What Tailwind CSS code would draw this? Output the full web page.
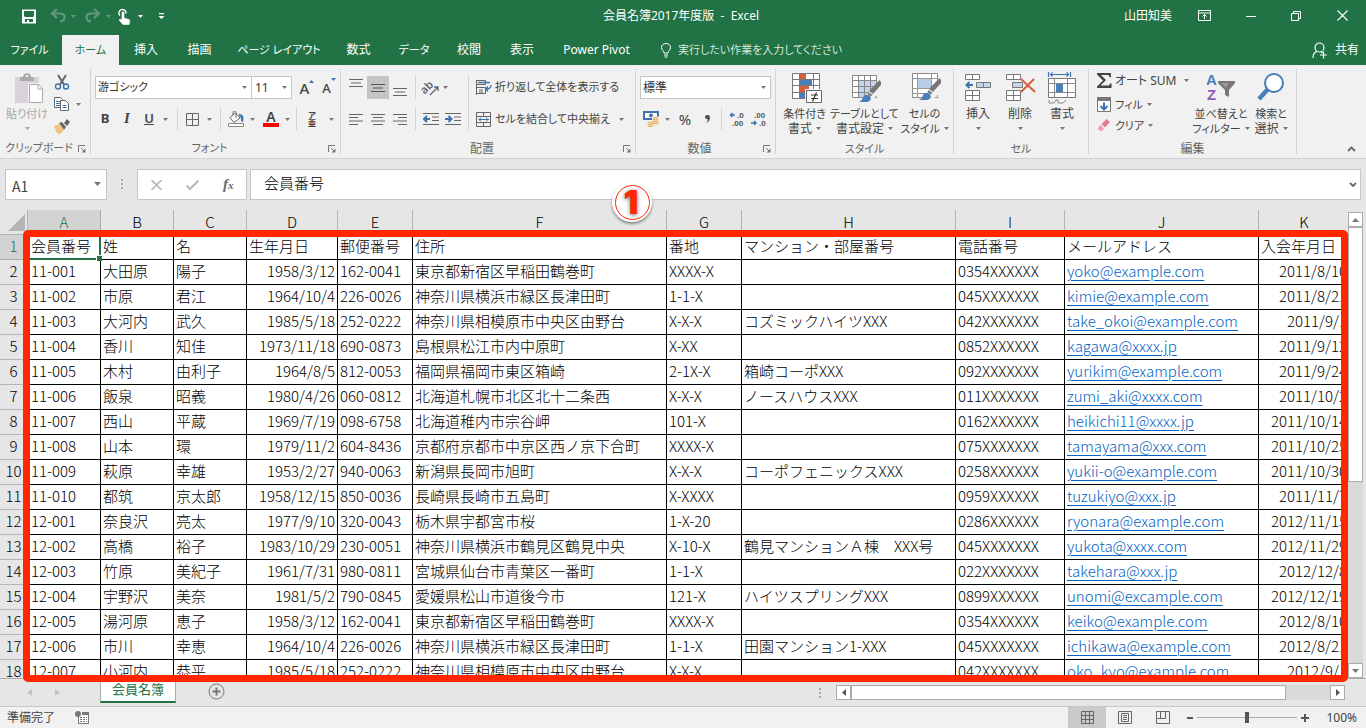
<!DOCTYPE html>
<html lang="ja">
<head>
    <meta charset="UTF-8">
    <meta name="viewport" content="width=device-width, initial-scale=1.0">
    <title>会員名簿2017年度版 - Excel</title>
    <script src="https://cdn.jsdelivr.net/npm/@tailwindcss/browser@4"></script>
</head>
<body class="bg-[#e6e6e6] font-['Noto_Sans','Noto_Sans_CJK_JP',sans-serif] text-xs text-[#444] [font-feature-settings:'palt']">
    <!-- Shared symbols -->
    <svg class="hidden">
        <symbol id="caret" viewBox="0 0 5 3"><path d="M0 0h5L2.500 3z" fill="#777"/></symbol>
        <symbol id="caret-current" viewBox="0 0 5 3"><path d="M0 0h5L2.500 3z" fill="currentColor"/></symbol>
        <symbol id="launcher" viewBox="0 0 8 8"><path d="M.5 7V.5H7M3 3l3 3" fill="none" stroke="#777"/><path d="M7.500 3.500v4h-4z" fill="#777"/></symbol>
        <symbol id="brush" viewBox="0 0 22 23"><path d="M20.500 0L22 2v3l-8 9-4-3z" fill="#777"/><path d="M9.500 12l4 3-2 1.500-3-2.500z" fill="#777"/><path d="M0 22c3-1 3-3 4-5 2-3 5-3 7-.5s0 5-3 5.500z" fill="#4a7eb8"/></symbol>
    </svg>

    <div class="flex h-screen flex-col overflow-hidden">
        <!-- Title bar -->
        <header class="bg-[#217346] text-white">
            <div class="flex h-[35px] items-center pb-1">
                <div class="flex w-[420px] items-center pl-[20px] pt-px">
                    <button aria-label="上書き保存" class="w-[29px]"><svg class="h-[15px] w-[18px]" viewBox="0 0 18 15"><path d="M2 .5h14v14H2z" fill="#fff"/><path d="M4 2h10v5l-1 1H5L4 7zM5 10h8v3H5z" fill="#217346"/><path d="M7 11h2v3H7z" fill="#fff"/></svg></button>
                    <button aria-label="元に戻す" class="flex w-[35px] items-center gap-0.5 text-[#629a7a]"><svg class="h-4 w-5" viewBox="0 0 20 16" fill="none" stroke="currentColor" stroke-width="2.200"><path d="M8 1L3 5.500 8 10M3.500 5.500H11c6 0 6 7 0 8"/></svg><svg class="h-[3px] w-[5px]"><use href="#caret-current"/></svg></button>
                    <button aria-label="やり直し" class="flex w-[33px] items-center gap-0.5 text-[#629a7a]"><svg class="h-4 w-5" viewBox="0 0 20 16" fill="none" stroke="currentColor" stroke-width="2.200"><path d="M10 1l5 4.500L10 10M14.500 5.500H7c-6 0-6 7 0 8"/></svg><svg class="h-[3px] w-[5px]"><use href="#caret-current"/></svg></button>
                    <button aria-label="タッチ モード" class="flex w-[41px] items-center gap-[7px]"><svg class="h-[17px] w-[14px]" viewBox="0 0 14 17"><path d="M2.800 7.500A3.600 3.600 0 1 1 9 5.500" fill="none" stroke="#fff" stroke-width="1.500"/><path d="M5 4h2v6l5 1.500c1 .5 1 2 0 5H6L2 12l2-1 1 1z" fill="#fff" stroke="#fff" stroke-width=".6"/></svg><svg class="h-[3px] w-[5px]"><use href="#caret-current"/></svg></button>
                    <button aria-label="クイック アクセス ツール バーのユーザー設定"><svg class="h-2 w-[7px]" viewBox="0 0 7 8" fill="#fff"><path d="M1 1h5v1.200H1zM.5 4h6l-3 3z"/></svg></button>
                </div>
                <h1 class="flex-1 text-center whitespace-pre pr-1">会員名簿2017年度版  -  Excel</h1>
                <div class="flex w-[420px] items-center justify-end pr-[18px]">
                    <span class="w-[74px]">山田知美</span>
                    <button aria-label="リボンの表示オプション" class="w-[48px]"><svg class="h-[11px] w-[13px]" viewBox="0 0 13 11" fill="none" stroke="#fff"><path d="M.5.500h12v10H.500zM.5 3h12M6.500 9V4.500M4.500 6.500l2-2 2 2"/></svg></button>
                    <button aria-label="最小化" class="w-[45px]"><svg class="h-[10px] w-[10px]" viewBox="0 0 10 10"><path d="M0 5.500h10" stroke="#fff"/></svg></button>
                    <button aria-label="元に戻す (縮小)" class="w-[46px]"><svg class="h-[10px] w-[10px]" viewBox="0 0 10 10" fill="none" stroke="#fff"><path d="M.5 2.500h7v7h-7zM2.500 2.500v-2h7v7h-2"/></svg></button>
                    <button aria-label="閉じる"><svg class="h-[11px] w-[11px]" viewBox="0 0 11 11" stroke="#fff" stroke-width="1.100"><path d="M.5.500l10 10M10.500.500l-10 10"/></svg></button>
                </div>
            </div>
            <!-- Ribbon tabs -->
            <nav class="flex h-[30px] items-stretch whitespace-nowrap">
                <button class="w-[62px] pr-[3px] text-[11px]">ファイル</button>
                <button class="w-[57px] bg-[#f1f1f1] text-[11px] text-[#217346]">ホーム</button>
                <button class="w-[54px]">挿入</button>
                <button class="w-[53px]">描画</button>
                <button class="w-[106px] text-[11px]">ページ レイアウト</button>
                <button class="w-[53px]">数式</button>
                <button class="w-[58px] text-[11px]">データ</button>
                <button class="w-[52px]">校閲</button>
                <button class="w-[54px]">表示</button>
                <button class="w-[98px] pr-[3px]">Power Pivot</button>
                <label class="ml-[14px] flex flex-1 items-center gap-[7px]">
                    <svg class="h-[15px] w-[10px]" viewBox="0 0 10 15" fill="none" stroke="#fff"><path d="M3 10c0-2-2.500-3-2.500-5.500a4.500 4 0 0 1 9 0C9.500 7 7 8 7 10zM3 12h4M3.500 14h3"/></svg>
                    <input aria-label="操作アシスト" placeholder="実行したい作業を入力してください" class="w-56 bg-transparent text-[11px] outline-none placeholder:text-[#d5e6db]">
                </label>
                <button class="flex items-center gap-2 pr-[7px]"><svg class="h-[17px] w-[15px]" viewBox="0 0 15 17" fill="none" stroke="#fff" stroke-width="1.200"><circle cx="7.500" cy="5.500" r="4.500"/><path d="M1 16c0-4 2-6 4-6.500M9 10l1.500 1M8 13h7M11.500 9.500v7"/></svg>共有</button>
            </nav>
        </header>

        <!-- Ribbon -->
        <section class="relative flex h-[94px] shrink-0 border-b border-[#d2d2d2] bg-[#f1f1f1] py-1 whitespace-nowrap">
            <div class="flex w-[91px] flex-col border-r border-[#d2d2d2]">
                <div class="flex flex-1">
                    <button class="flex w-[54px] flex-col items-center pt-[3px] text-[11px] leading-[15px] text-[#a6a6a6]">
                        <svg class="mb-0.5 ml-1 h-8 w-8" viewBox="0 0 32 32"><path d="M2 5h24v26H2z" fill="#d8d3d8"/><path d="M7 9V5h3c0-5 8-5 8 0h3v4z" fill="#aaa"/><circle cx="14" cy="4" r="1.200" fill="#f1f1f1"/><path d="M15 11h16v21H15z" fill="#f1f1f1"/><path d="M16.500 12.500h9l4 4v14h-13z" fill="#fff" stroke="#aaa"/><path d="M25 12v5h5" fill="none" stroke="#aaa"/></svg>
                        貼り付け
                        <svg class="mt-[6px] h-[3px] w-[5px]"><use href="#caret-current"/></svg>
                    </button>
                    <div class="flex flex-col pt-[2px]">
                        <button aria-label="切り取り" class="h-[22px]"><svg class="h-4 w-4" viewBox="0 0 16 16"><path d="M4 1l6 9.500M12 1L6 10.500" stroke="#666" stroke-width="2"/><g fill="none" stroke="#3f73ad" stroke-width="1.400"><circle cx="4" cy="12.500" r="2.500"/><circle cx="12" cy="12.500" r="2.500"/></g></svg></button>
                        <button aria-label="コピー" class="flex h-[23px] items-center gap-1.5"><svg class="h-[15px] w-4" viewBox="0 0 16 15" fill="#fff" stroke="#666"><path d="M.5.500h6l2 2v8h-8z"/><path d="M2 4.500h4M2 6.500h4M2 8.500h4" stroke="#3f73ad"/><path d="M6.500 3.500h5l3 3v7h-8z"/><path d="M8.500 8.500h4M8.500 10.500h4" stroke="#3f73ad"/></svg><svg class="h-[3px] w-[5px]"><use href="#caret"/></svg></button>
                        <button aria-label="書式のコピー" class="h-[22px]"><svg class="h-4 w-4" viewBox="0 0 16 16"><path d="M13 0l3 3-3 4-3-3z" fill="#666"/><path d="M5 4l3-1 4 5-2 3z" fill="#666"/><path d="M0 7l5-2 5 6-4 4-3-1z" fill="#f0c27c"/></svg></button>
                    </div>
                </div>
                <div class="flex h-[11px] items-center text-[#666]"><span class="flex-1 text-center text-[11px]">クリップボード</span><button aria-label="クリップボードの詳細" class="w-3"><svg class="h-2 w-2"><use href="#launcher"/></svg></button></div>
            </div>

            <div class="flex w-[250px] flex-col border-r border-[#d2d2d2]">
                <div class="flex flex-1 flex-col gap-[9px] pt-[7px] pl-1">
                    <div class="flex h-[23px] items-center">
                        <div class="relative"><select aria-label="フォント名" class="h-[23px] w-[157px] appearance-none border border-[#c6c6c6] bg-white px-0.5 text-[11px] text-[#333]"><option>游ゴシック</option></select><svg class="absolute top-[10px] right-[5px] h-[3px] w-[5px]"><use href="#caret"/></svg></div>
                        <div class="relative"><select aria-label="フォント サイズ" class="h-[23px] w-[40px] appearance-none border border-l-0 border-[#c6c6c6] bg-white px-[3px] text-[#333]"><option>11</option></select><svg class="absolute top-[10px] right-[5px] h-[3px] w-[5px]"><use href="#caret"/></svg></div>
                        <button aria-label="フォント サイズの拡大" class="ml-1 flex w-[23px] justify-center"><span class="text-[15px] leading-4 font-medium">A</span><svg class="h-[3px] w-[5px]" viewBox="0 0 5 3"><path d="M0 3h5L2.500 0z" fill="#3f73ad"/></svg></button>
                        <button aria-label="フォント サイズの縮小" class="flex w-[23px] justify-center text-[#3f73ad]"><span class="text-[13px] leading-5 font-medium text-[#444]">A</span><svg class="h-[3px] w-[5px]"><use href="#caret-current"/></svg></button>
                    </div>
                    <div class="flex h-[22px] items-center">
                        <button class="w-[20px] text-[13px] font-bold">B</button>
                        <button class="w-[24px] font-['Liberation_Serif',serif] text-[15px] font-bold italic">I</button>
                        <button class="w-[20px] text-[13px] font-semibold underline">U</button>
                        <button aria-label="下線の種類" class="w-[18px] pl-1"><svg class="h-[3px] w-[5px]"><use href="#caret"/></svg></button>
                        <i class="h-[22px] w-px bg-[#d2d2d2]"></i>
                        <button aria-label="罫線" class="flex w-[42px] items-center gap-2 pl-2"><svg class="h-[13px] w-[13px]" viewBox="0 0 13 13" fill="none" stroke="#666"><path d="M.5.500h12v12H.500zM6.500 0v13M0 6.500h13"/></svg><svg class="h-[3px] w-[5px]"><use href="#caret"/></svg></button>
                        <i class="h-[22px] w-px bg-[#d2d2d2]"></i>
                        <button aria-label="塗りつぶしの色" class="flex w-[35px] items-center gap-1.5 pl-[7px]"><svg class="h-4 w-4" viewBox="0 0 16 16"><path d="M2 6.500L7.500 2l4.500 5-6 4.500z" fill="#fff" stroke="#666"/><path d="M5 4V1.500c0-2 3-2 3 0V7" fill="none" stroke="#666"/><path d="M11 3c5 0 5 4 4 8l-2-1c0-3 0-4-2-5z" fill="#3f73ad"/><path d="M.5 12.500h15v3H.500z" fill="#fff" stroke="#888"/></svg><svg class="h-[3px] w-[5px]"><use href="#caret"/></svg></button>
                        <button aria-label="フォントの色" class="flex w-[40px] items-center gap-1.5 pl-[7px]"><span class="w-4 border-b-4 border-[#f00] text-center text-[14px] leading-3 font-semibold">A</span><svg class="h-[3px] w-[5px]"><use href="#caret"/></svg></button>
                        <i class="h-[22px] w-px bg-[#d2d2d2]"></i>
                        <button aria-label="ふりがなの表示" class="flex items-center gap-[13px] pl-[11px]"><span class="flex w-2 flex-col items-center text-[8px] leading-2 font-bold"><span>ア</span><span>亜</span></span><svg class="h-[3px] w-[5px]"><use href="#caret"/></svg></button>
                    </div>
                </div>
                <div class="flex h-[11px] items-center text-[#666]"><span class="flex-1 text-center text-[11px]">フォント</span><button aria-label="フォントの詳細" class="w-3"><svg class="h-2 w-2"><use href="#launcher"/></svg></button></div>
            </div>

            <div class="flex w-[295px] flex-col border-r border-[#d2d2d2]">
                <div class="flex flex-1 pt-[7px] pl-1">
                    <div class="flex h-[54px] w-[124px] flex-col gap-[9px] border-r border-[#d2d2d2]">
                        <div class="flex h-[23px] items-center">
                            <button aria-label="上揃え" class="flex h-[23px] w-[22px] justify-center pt-[3px]"><svg class="h-2 w-[14px]" viewBox="0 0 14 8"><path d="M0 .5h14M2 4h10M0 7.500h14" stroke="#666"/></svg></button>
                            <button aria-label="上下中央揃え" class="flex h-[23px] w-[22px] items-center justify-center bg-[#c5c5c5]"><svg class="h-[8px] w-[14px]" viewBox="0 0 14 8"><path d="M0 .5h14M2 4h10M0 7.500h14" stroke="#555"/></svg></button>
                            <button aria-label="下揃え" class="flex h-[23px] w-[22px] items-end justify-center pb-[3px]"><svg class="h-2 w-[14px]" viewBox="0 0 14 8"><path d="M0 .5h14M2 4h10M0 7.500h14" stroke="#666"/></svg></button>
                            <i class="ml-1 h-[23px] w-px bg-[#d2d2d2]"></i>
                            <button aria-label="方向" class="ml-[7px] flex items-center gap-1"><svg class="h-4 w-4 overflow-visible" viewBox="0 0 16 16"><text x="0" y="13" transform="rotate(-45 3 12)" font-size="11" font-weight="600" fill="#666">ab</text><path d="M7 15l8-8M11 7h4v4" fill="none" stroke="#666" stroke-width="1.300"/></svg><svg class="h-[3px] w-[5px]"><use href="#caret"/></svg></button>
                        </div>
                        <div class="flex h-[22px] items-center">
                            <button aria-label="左揃え" class="flex w-[22px] justify-center"><svg class="h-[11px] w-[14px]" viewBox="0 0 14 11"><path d="M0 .5h14M0 3.500h9M0 7h14M0 10.500h9" stroke="#666"/></svg></button>
                            <button aria-label="中央揃え" class="flex w-[22px] justify-center"><svg class="h-[11px] w-[14px]" viewBox="0 0 14 11"><path d="M0 .5h14M2 3.500h10M0 7h14M2 10.500h10" stroke="#666"/></svg></button>
                            <button aria-label="右揃え" class="flex w-[22px] justify-center"><svg class="h-[11px] w-[14px]" viewBox="0 0 14 11"><path d="M0 .5h14M5 3.500h9M0 7h14M5 10.500h9" stroke="#666"/></svg></button>
                            <i class="ml-1 h-[22px] w-px bg-[#d2d2d2]"></i>
                            <button aria-label="インデントを減らす" class="ml-[7px] w-[22px]"><svg class="h-3 w-4" viewBox="0 0 16 12"><path d="M0 .5h16M9 4h7M9 7.500h7M0 11.500h16" stroke="#666"/><path d="M7 6H1.500M4 3L1 6l3 3" fill="none" stroke="#3f73ad" stroke-width="2"/></svg></button>
                            <button aria-label="インデントを増やす"><svg class="h-3 w-4" viewBox="0 0 16 12"><path d="M0 .5h16M9 4h7M9 7.500h7M0 11.500h16" stroke="#666"/><path d="M0 6h6M3.500 3l3 3-3 3" fill="none" stroke="#3f73ad" stroke-width="2"/></svg></button>
                        </div>
                    </div>
                    <div class="flex flex-1 flex-col gap-[9px] pl-[7px] text-[11px]">
                        <button class="flex h-[23px] items-center gap-[3px]"><svg class="h-[15px] w-4" viewBox="0 0 16 15"><path d="M.5 0v15M.5.500h9v4h-9M.5 7.500h9v6h-9M3 10h4M3 12h4" fill="none" stroke="#666"/><path d="M2 2.500h12M15 5c0 3-1 4-5 4M12 6.500L9.500 9l2.500 2.500" fill="none" stroke="#3f73ad" stroke-width="1.400"/></svg>折り返して全体を表示する</button>
                        <button class="flex h-[22px] items-center gap-[3px]"><svg class="h-[15px] w-4" viewBox="0 0 16 15" fill="none" stroke="#666"><path d="M.5.500h14v14H.500zM.5 4.500h14M.5 10.500h14M7.500 0v4M7.500 11v4"/><path d="M3 7.500h10M5 5.500l-2 2 2 2M10 5.500l2 2-2 2" stroke="#3f73ad"/></svg>セルを結合して中央揃え<svg class="ml-1.5 h-[3px] w-[5px]"><use href="#caret"/></svg></button>
                    </div>
                </div>
                <div class="flex h-[11px] items-center text-[#666]"><span class="flex-1 text-center">配置</span><button aria-label="配置の詳細" class="w-3"><svg class="h-2 w-2"><use href="#launcher"/></svg></button></div>
            </div>

            <div class="flex w-[140px] flex-col border-r border-[#d2d2d2]">
                <div class="flex flex-1 flex-col gap-[9px] pt-[7px] pl-1">
                    <div class="relative h-[23px] w-[131px]"><select aria-label="表示形式" class="h-full w-full appearance-none border border-[#c6c6c6] bg-white px-0.5 text-[#333]"><option>標準</option></select><svg class="absolute top-[10px] right-[5px] h-[3px] w-[5px]"><use href="#caret"/></svg></div>
                    <div class="flex h-[22px] items-center pl-[3px]">
                        <button aria-label="通貨表示形式" class="flex w-[34px] items-center gap-1.5"><svg class="h-4 w-4" viewBox="0 0 16 16"><path d="M0 0h16v9H0z" fill="#3f73ad"/><path d="M2 2h12v5H2z" fill="#fff"/><circle cx="8" cy="4.500" r="2" fill="#3f73ad"/><path d="M9 5.500h7v9H9zM4 10h7v6H4z" fill="#f1f1f1"/><path d="M10 6.500h5M9.500 8.500h6M9.500 10.500h6M9.500 12.500h6M5 11.500h5M4.500 13.500h6M5 15.500h5" stroke="#eab766" stroke-width="1.400"/></svg><svg class="h-[3px] w-[5px]"><use href="#caret"/></svg></button>
                        <button class="w-[16px] text-[15px]">%</button>
                        <button aria-label="桁区切りスタイル" class="flex w-[28px] justify-center"><svg class="h-2 w-[5px]" viewBox="0 0 5 8"><path d="M0 2a2.400 2 0 0 1 5 0c0 3-1 5-4 6 1-1 2-2 1.500-4C1 4 0 3.500 0 2z" fill="#555"/></svg></button>
                        <i class="h-[22px] w-px bg-[#d2d2d2]"></i>
                        <button aria-label="小数点以下の表示桁数を増やす" class="ml-[7px] w-[22px]"><svg class="h-4 w-4 font-['Liberation_Sans',sans-serif]" viewBox="0 0 16 16" font-size="8" font-weight="700" fill="#555"><text x="8" y="7">.0</text><text x="3" y="15">.00</text><path d="M6 4H1.500M3.500 2l-2 2 2 2" fill="none" stroke="#3f73ad" stroke-width="1.500"/></svg></button>
                        <button aria-label="小数点以下の表示桁数を減らす"><svg class="h-4 w-4 font-['Liberation_Sans',sans-serif]" viewBox="0 0 16 16" font-size="8" font-weight="700" fill="#555"><text x="3" y="7">.00</text><text x="8" y="15">.0</text><path d="M0 12h4.500M3 10l2 2-2 2" fill="none" stroke="#3f73ad" stroke-width="1.500"/></svg></button>
                    </div>
                </div>
                <div class="flex h-[11px] items-center text-[#666]"><span class="flex-1 text-center">数値</span><button aria-label="数値の詳細" class="w-3"><svg class="h-2 w-2"><use href="#launcher"/></svg></button></div>
            </div>

            <div class="flex w-[178px] flex-col border-r border-[#d2d2d2]">
                <div class="flex flex-1 justify-center text-[11px] leading-[15px]">
                    <button class="flex w-[56px] flex-col items-center pt-[3px]">
                        <svg class="mb-0.5 ml-1 h-8 w-8" viewBox="0 0 32 32"><path d="M1.500 1.500h27v25h-27z" fill="#fff"/><path d="M9 2h6v6H9zM9 14h9v6H9z" fill="#d65f3e"/><path d="M9 8h12v6H9zM9 20h5v6H9z" fill="#4a7eb8"/><path d="M1.500 1.500h27v25h-27zM8.500 1v26M22.500 1v26M1 7.500h28M1 13.500h28M1 20.500h28" fill="none" stroke="#777"/><path d="M14 17h18v15H14z" fill="#f1f1f1"/><path d="M15.500 18.500h15v12h-15z" fill="#fff" stroke="#666"/><path d="M20 23h7M20 26.500h7M25.500 20.500l-4 9" stroke="#333" stroke-width="1.200"/></svg>
                        <span>条件付き</span><span class="flex items-center gap-1 text-xs leading-[15px]">書式<svg class="h-[3px] w-[5px]"><use href="#caret"/></svg></span>
                    </button>
                    <button class="flex w-[64px] flex-col items-center pt-[3px]">
                        <svg class="mb-0.5 ml-1 h-8 w-8" viewBox="0 0 32 32"><path d="M1.500 3.500h24v22h-24z" fill="#fff"/><path d="M8 8h18v18H8z" fill="#c3d5ea"/><path d="M1.500 3.500h24v22h-24zM7.500 3v23M13.500 3v23M19.500 3v23M1 8.500h25M1 14.500h25M1 20.500h25" fill="none" stroke="#888"/><path d="M6 30L31 9v10L18 31z" fill="#f1f1f1"/><use href="#brush" x="8" y="8" width="22" height="23"/></svg>
                        <span>テーブルとして</span><span class="flex items-center gap-1 text-xs leading-[15px]">書式設定<svg class="h-[3px] w-[5px]"><use href="#caret"/></svg></span>
                    </button>
                    <button class="flex w-[56px] flex-col items-center pt-[3px]">
                        <svg class="mb-0.5 ml-1 h-8 w-8" viewBox="0 0 32 32"><path d="M1.500 1.500h25v24h-25z" fill="#fff" stroke="#888"/><path d="M6.500 1v25M20.500 1v25M1 6.500h26M1 16.500h26M1 21.500h26" stroke="#999"/><path d="M7 7h13v9H7z" fill="#b8cde6"/><path d="M6 30L31 7v12L18 31z" fill="#f1f1f1"/><use href="#brush" x="8" y="6" width="22" height="23"/></svg>
                        <span>セルの</span><span class="flex items-center gap-1">スタイル<svg class="h-[3px] w-[5px]"><use href="#caret"/></svg></span>
                    </button>
                </div>
                <div class="h-[11px] text-center text-[11px] leading-[11px] text-[#666]">スタイル</div>
            </div>

            <div class="flex w-[135px] flex-col border-r border-[#d2d2d2]">
                <div class="flex flex-1 pl-[3px] leading-[15px]">
                    <button class="flex w-[42px] flex-col items-center pt-[3px]">
                        <svg class="mb-0.5 h-8 w-8" viewBox="0 0 32 32"><path d="M3.500 2.500h14v5h-14zM10.500 2v6M3.500 18.500h14v10h-14zM10.500 18v11M3 23.500h15" fill="#fff" stroke="#777"/><path d="M14.500 10.500h14v5h-14zM21.500 10v6" fill="#c3d5ea" stroke="#777"/><path d="M11 13H5M7.500 10L4.500 13l3 3" fill="none" stroke="#3f73ad" stroke-width="2"/></svg>
                        挿入<svg class="mt-[6px] h-[3px] w-[5px]"><use href="#caret"/></svg>
                    </button>
                    <button class="flex w-[42px] flex-col items-center pt-[3px]">
                        <svg class="mb-0.5 h-8 w-8" viewBox="0 0 32 32"><path d="M2.500 2.500h14v5h-14zM9.500 2v6M2.500 18.500h14v10h-14zM9.500 18v11M2 23.500h15" fill="#fff" stroke="#777"/><path d="M8.500 10.500h10v5h-10z" fill="#c3d5ea" stroke="#777"/><path d="M17 7l14 13M30 7L17 20" stroke="#d65f3e" stroke-width="2"/></svg>
                        削除<svg class="mt-[6px] h-[3px] w-[5px]"><use href="#caret"/></svg>
                    </button>
                    <button class="flex w-[42px] flex-col items-center pt-[3px]">
                        <svg class="mb-0.5 h-8 w-8" viewBox="0 0 32 32"><path d="M2.500 0v5M24.500 0v5M4 2.500h19M6.500.500l-2 2 2 2M20.500.500l2 2-2 2" fill="none" stroke="#3f73ad" stroke-width="1.200"/><path d="M2.500 6.500h27v19h-27z" fill="#fff" stroke="#777"/><path d="M8.500 6v20M21.500 6v20M2 11.500h28M2 20.500h28" stroke="#888"/><path d="M10 12h7v8h-7z" fill="#4a7eb8"/><path d="M3 28v3h5l2-3h2v3h5l3-3" fill="none" stroke="#888"/></svg>
                        書式<svg class="mt-[6px] h-[3px] w-[5px]"><use href="#caret"/></svg>
                    </button>
                </div>
                <div class="h-[11px] text-center text-[11px] leading-[11px] text-[#666]">セル</div>
            </div>

            <div class="flex w-[208px] flex-col border-r border-[#d2d2d2]">
                <div class="flex flex-1 pl-2 leading-[15px]">
                    <div class="mr-1 flex w-[92px] flex-col">
                        <button class="flex h-[22px] items-center gap-[3px]"><svg class="h-[15px] w-[15px]" viewBox="0 0 15 15"><path d="M0 0h14v4h-1.500l-1-2H4l5 5-5.500 5.500H12l1-2h1.500V15H0v-1.500L6 7.500 0 1.500z" fill="#444"/></svg>オート SUM<svg class="ml-auto h-[3px] w-[5px]"><use href="#caret"/></svg></button>
                        <button class="flex h-[23px] items-center gap-1 pt-1 text-[11px]"><svg class="h-[15px] w-[14px]" viewBox="0 0 14 15"><path d="M.5.500h13v14H.500z" fill="#fff" stroke="#777"/><path d="M0 0h14v4H0z" fill="#777"/><path d="M7 5.500V12M3.500 9L7 12.500 10.500 9" fill="none" stroke="#3f73ad" stroke-width="2"/></svg>フィル<svg class="h-[3px] w-[5px]"><use href="#caret"/></svg></button>
                        <button class="flex h-[22px] items-center gap-1 text-[11px]"><svg class="h-3 w-[14px]" viewBox="0 0 14 12"><path d="M9.500 0L13 3 8 8.500 4.500 5z" fill="#e67b90"/><path d="M3.500 6L7 9.500 5 12H3L.500 9.500z" fill="#ee9fae"/></svg>クリア<svg class="h-[3px] w-[5px]"><use href="#caret"/></svg></button>
                    </div>
                    <button class="flex w-[56px] flex-col items-center pt-[3px] text-[11px]">
                        <svg class="mb-0.5 h-8 w-8 font-['Liberation_Sans',sans-serif]" viewBox="0 0 32 32" font-size="15" font-weight="700"><text x="1" y="13" fill="#4a7eb8">A</text><text x="2" y="28" fill="#8f5bb5">Z</text><path d="M13 9h17v2l-6 7v7l-4-2v-5l-7-7z" fill="#777"/><path d="M16 11h8l-3 5z" fill="#999"/></svg>
                        <span>並べ替えと</span><span class="flex items-center gap-1">フィルター<svg class="h-[3px] w-[5px]"><use href="#caret"/></svg></span>
                    </button>
                    <button class="flex w-[44px] flex-col items-center pt-[3px] text-[11px]">
                        <svg class="mb-0.5 h-8 w-8" viewBox="0 0 32 32"><path d="M13 17L4 27" stroke="#4a7eb8" stroke-width="4.500"/><circle cx="19" cy="11" r="9" fill="#fff" stroke="#4a7eb8" stroke-width="2"/></svg>
                        <span>検索と</span><span class="flex items-center gap-1 text-xs leading-[15px]">選択<svg class="h-[3px] w-[5px]"><use href="#caret"/></svg></span>
                    </button>
                </div>
                <div class="h-[11px] text-center leading-[11px] text-[#666]">編集</div>
            </div>
            <button aria-label="リボンを折りたたむ" class="ml-auto self-end pr-[10px] pb-0.5"><svg class="h-[6px] w-[9px]" viewBox="0 0 9 6"><path d="M1 5l3.500-3.500L8 5" fill="none" stroke="#666" stroke-width="1.800"/></svg></button>
        </section>

        <!-- Formula bar -->
        <section class="flex h-[51px] shrink-0 items-start py-[10px] pr-[5px] pl-[5px] font-['Noto_Sans_CJK_JP',sans-serif] text-sm">
            <div class="relative"><input aria-label="名前ボックス" value="A1" class="h-[31px] w-[102px] border border-[#c6c6c6] bg-white px-1.5 pt-0.5"><svg class="absolute top-[13px] right-[6px] h-1 w-[7px]" viewBox="0 0 7 4"><path d="M0 0h7L3.500 4z" fill="#777"/></svg></div>
            <svg class="h-[31px] w-[30px]" viewBox="0 0 30 31" fill="#aaa"><path d="M14 10h2v2h-2zM14 14h2v2h-2zM14 18h2v2h-2z"/></svg>
            <div class="flex h-[31px] w-[110px] items-center border border-[#c6c6c6] bg-white pl-[13px]">
                <button aria-label="キャンセル" class="w-[35px]"><svg class="h-[10px] w-[11px]" viewBox="0 0 11 10"><path d="M.5 0l10 10M10.500 0L.500 10" stroke="#bbb" stroke-width="1.800"/></svg></button>
                <button aria-label="入力" class="w-[37px]"><svg class="h-[10px] w-[13px]" viewBox="0 0 13 10"><path d="M.5 5.500L4 9l8.500-8.500" fill="none" stroke="#bbb" stroke-width="2.200"/></svg></button>
                <button aria-label="関数の挿入" class="font-['Liberation_Serif',serif] text-[15px] leading-4 font-bold text-[#666] italic">f<span class="text-[11px]">x</span></button>
            </div>
            <div class="relative ml-[3px] flex-1"><input aria-label="数式バー" value="会員番号" class="h-[31px] w-full border border-[#c6c6c6] bg-white px-[13px] pb-1 text-[15px] font-light text-black [font-feature-settings:normal]"><svg class="absolute top-[13px] right-1 h-[5px] w-2" viewBox="0 0 8 5"><path d="M1 1l3 3 3-3" fill="none" stroke="#666" stroke-width="1.800"/></svg></div>
        </section>

        <!-- Worksheet -->
        <main class="relative flex min-h-0 flex-1">
            <div class="min-w-0 flex-1 overflow-hidden">
                <table class="w-[1350px] table-fixed border-separate border-spacing-0 font-['Noto_Sans_CJK_JP',sans-serif] text-[15px] leading-[22px] font-light whitespace-nowrap text-black [font-feature-settings:normal]">
                    <colgroup>
                        <col class="w-[28px]"><col class="w-[73px]"><col class="w-[73px]"><col class="w-[73px]"><col class="w-[91px]"><col class="w-[75px]"><col class="w-[254px]"><col class="w-[75px]"><col class="w-[214px]"><col class="w-[109px]"><col class="w-[194px]"><col class="w-[91px]">
                    </colgroup>
                    <thead><tr id="columns"></tr></thead>
                    <tbody id="rows"></tbody>
                </table>
            </div>
            <div class="flex w-[18px] flex-col items-center pt-0.5 pr-1">
                <button aria-label="上へスクロール" class="flex h-[15px] w-[15px] items-center justify-center border border-[#ababab] bg-white"><svg class="h-1 w-[7px]" viewBox="0 0 7 4"><path d="M0 4h7L3.500 0z" fill="#777"/></svg></button>
                <div class="flex w-[15px] flex-1 flex-col bg-[#dadada]"><div class="h-[255px] border border-[#ababab] bg-white"></div></div>
                <button aria-label="下へスクロール" class="flex h-[15px] w-[15px] items-center justify-center border border-[#ababab] bg-white"><svg class="h-1 w-[7px]" viewBox="0 0 7 4"><path d="M0 0h7L3.500 4z" fill="#777"/></svg></button>
            </div>
            <!-- Highlight around the list -->
            <div class="pointer-events-none absolute top-[20px] right-[18px] -bottom-1 left-[23px] z-10 rounded-[5px] border-[7px] border-[#ff2600]"></div>
            <div class="absolute -top-[28px] left-[612px] z-20 flex h-10 w-10 items-center justify-center rounded-full bg-white shadow-[0_2px_3px_rgba(0,0,0,0.4)]">
                <span class="flex h-[35px] w-[35px] items-center justify-center rounded-full border border-[#ff2600] pr-0.5 font-['Inter','Liberation_Sans',sans-serif] text-[33px] leading-none font-black text-[#ff2600] [text-shadow:0_1px_4px_rgba(0,0,0,0.6)]">1</span>
            </div>
        </main>

        <!-- Sheet tabs -->
        <nav class="flex h-[29px] shrink-0 border-t border-b border-t-[#ababab] border-b-[#c6c6c6]">
            <div class="flex w-[100px] gap-[23px] pt-[10px] pl-[27px]">
                <button aria-label="前のシート" class="h-[7px]"><svg class="h-[7px] w-[5px]" viewBox="0 0 5 7"><path d="M5 0v7L0 3.500z" fill="#c2c2c2"/></svg></button>
                <button aria-label="次のシート" class="h-[7px]"><svg class="h-[7px] w-[5px]" viewBox="0 0 5 7"><path d="M0 0v7l5-3.500z" fill="#c2c2c2"/></svg></button>
            </div>
            <button class="h-[24px] w-[76px] border-x border-b-2 border-x-[#ababab] border-b-[#217346] bg-white text-[13px] text-[#217346]">会員名簿</button>
            <button aria-label="新しいシート" class="ml-8 self-start pt-1"><svg class="h-[17px] w-[17px]" viewBox="0 0 17 17" fill="none" stroke="#777"><circle cx="8.500" cy="8.500" r="7.500"/><path d="M8.500 4.500v8M4.500 8.500h8" stroke-width="2"/></svg></button>
            <div class="ml-auto flex items-center pr-[21px]">
                <svg class="mr-[14px] h-3 w-[3px]" viewBox="0 0 3 12" fill="#aaa"><path d="M0 1h2v2H0zM0 5h2v2H0zM0 9h2v2H0z"/></svg>
                <button aria-label="左へスクロール" class="flex h-[15px] w-[15px] items-center justify-center border border-[#ababab] bg-white"><svg class="h-[7px] w-1" viewBox="0 0 4 7"><path d="M4 0v7L0 3.500z" fill="#555"/></svg></button>
                <div class="flex h-[15px] w-[479px] bg-[#dadada]"><div class="w-[435px] border border-[#ababab] bg-white"></div></div>
                <button aria-label="右へスクロール" class="flex h-[15px] w-[15px] items-center justify-center border border-[#ababab] bg-white"><svg class="h-[7px] w-1" viewBox="0 0 4 7"><path d="M0 0v7l4-3.500z" fill="#555"/></svg></button>
            </div>
        </nav>

        <!-- Status bar -->
        <footer class="flex h-[21px] shrink-0 items-center bg-[#f1f1f1] pl-[7px]">
            <span class="w-[68px]">準備完了</span>
            <button aria-label="マクロの記録"><svg class="h-[13px] w-[14px]" viewBox="0 0 14 13"><path d="M3.500 5v7.500h10v-10H8" fill="#fff" stroke="#777"/><path d="M7 1h7v3H7z" fill="#777"/><circle cx="3" cy="3" r="3" fill="#777"/><path d="M5 6.500h7M5 8.500h7M5 10.500h7" stroke="#777" stroke-dasharray="2 1"/></svg></button>
            <div class="ml-auto flex h-full items-center">
                <button aria-label="標準" class="flex h-full w-[38px] items-center justify-center bg-[#cacaca]"><svg class="h-[13px] w-[13px]" viewBox="0 0 13 13" fill="none" stroke="#666"><path d="M.5.500h12v12H.500zM4.500 0v13M8.500 0v13M0 4.500h13M0 8.500h13"/></svg></button>
                <button aria-label="ページ レイアウト" class="flex w-[38px] items-center justify-center"><svg class="h-[13px] w-[14px]" viewBox="0 0 14 13" fill="none" stroke="#666"><path d="M.5.500h13v12H.500zM3.500 2.500h7v8h-7zM5 4.500h4M5 6.500h4M5 8.500h4"/></svg></button>
                <button aria-label="改ページ プレビュー" class="flex w-[38px] items-center justify-center"><svg class="h-[13px] w-[14px]" viewBox="0 0 14 13" fill="none" stroke="#666"><path d="M.5.500h13v12H.500zM4.500 0v7.500M9.500 0v7.500M.5 7.500h9"/></svg></button>
                <button aria-label="縮小" class="flex w-[15px] justify-center"><svg class="h-2 w-2" viewBox="0 0 8 8"><path d="M1 4h6" stroke="#555" stroke-width="2"/></svg></button>
                <input type="range" aria-label="ズーム" value="50" class="h-[13px] w-[100px] appearance-none bg-[linear-gradient(#ababab,#ababab)] bg-[length:100%_1px] bg-center bg-no-repeat [&::-webkit-slider-thumb]:h-[11px] [&::-webkit-slider-thumb]:w-1 [&::-webkit-slider-thumb]:appearance-none [&::-webkit-slider-thumb]:bg-[#555]">
                <button aria-label="拡大" class="flex w-[15px] justify-center"><svg class="h-2 w-2" viewBox="0 0 8 8"><path d="M0 4h8M4 0v8" stroke="#555" stroke-width="2"/></svg></button>
                <button class="w-[54px] pr-[9px] text-right">100%</button>
            </div>
        </footer>
    </div>

    <script>
        const columns = ['A', 'B', 'C', 'D', 'E', 'F', 'G', 'H', 'I', 'J', 'K'];
        const rows = [
            ['会員番号', '姓', '名', '生年月日', '郵便番号', '住所', '番地', 'マンション・部屋番号', '電話番号', 'メールアドレス', '入会年月日'],
            ['11-001', '大田原', '陽子', '1958/3/12', '162-0041', '東京都新宿区早稲田鶴巻町', 'XXXX-X', '', '0354XXXXXX', 'yoko@example.com', '2011/8/10'],
            ['11-002', '市原', '君江', '1964/10/4', '226-0026', '神奈川県横浜市緑区長津田町', '1-1-X', '', '045XXXXXXX', 'kimie@example.com', '2011/8/21'],
            ['11-003', '大河内', '武久', '1985/5/18', '252-0222', '神奈川県相模原市中央区由野台', 'X-X-X', 'コズミックハイツXXX', '042XXXXXXX', 'take_okoi@example.com', '2011/9/1'],
            ['11-004', '香川', '知佳', '1973/11/18', '690-0873', '島根県松江市内中原町', 'X-XX', '', '0852XXXXXX', 'kagawa@xxxx.jp', '2011/9/12'],
            ['11-005', '木村', '由利子', '1964/8/5', '812-0053', '福岡県福岡市東区箱崎', '2-1X-X', '箱崎コーポXXX', '092XXXXXXX', 'yurikim@example.com', '2011/9/24'],
            ['11-006', '飯泉', '昭義', '1980/4/26', '060-0812', '北海道札幌市北区北十二条西', 'X-X-X', 'ノースハウスXXX', '011XXXXXXX', 'zumi_aki@xxxx.com', '2011/10/2'],
            ['11-007', '西山', '平蔵', '1969/7/19', '098-6758', '北海道稚内市宗谷岬', '101-X', '', '0162XXXXXX', 'heikichi11@xxxx.jp', '2011/10/14'],
            ['11-008', '山本', '環', '1979/11/2', '604-8436', '京都府京都市中京区西ノ京下合町', 'XXXX-X', '', '075XXXXXXX', 'tamayama@xxx.com', '2011/10/25'],
            ['11-009', '萩原', '幸雄', '1953/2/27', '940-0063', '新潟県長岡市旭町', 'X-X-X', 'コーポフェニックスXXX', '0258XXXXXX', 'yukii-o@example.com', '2011/10/30'],
            ['11-010', '都筑', '京太郎', '1958/12/15', '850-0036', '長崎県長崎市五島町', 'X-XXXX', '', '0959XXXXXX', 'tuzukiyo@xxx.jp', '2011/11/7'],
            ['12-001', '奈良沢', '亮太', '1977/9/10', '320-0043', '栃木県宇都宮市桜', '1-X-20', '', '0286XXXXXX', 'ryonara@example.com', '2012/11/15'],
            ['12-002', '高橋', '裕子', '1983/10/29', '230-0051', '神奈川県横浜市鶴見区鶴見中央', 'X-10-X', '鶴見マンションＡ棟　XXX号', '045XXXXXXX', 'yukota@xxxx.com', '2012/11/29'],
            ['12-003', '竹原', '美紀子', '1961/7/31', '980-0811', '宮城県仙台市青葉区一番町', '1-1-X', '', '022XXXXXXX', 'takehara@xxx.jp', '2012/12/8'],
            ['12-004', '宇野沢', '美奈', '1981/5/2', '790-0845', '愛媛県松山市道後今市', '121-X', 'ハイツスプリングXXX', '0899XXXXXX', 'unomi@excample.com', '2012/12/19'],
            ['12-005', '湯河原', '恵子', '1958/3/12', '162-0041', '東京都新宿区早稲田鶴巻町', 'XXXX-X', '', '0354XXXXXX', 'keiko@example.com', '2012/8/10'],
            ['12-006', '市川', '幸恵', '1964/10/4', '226-0026', '神奈川県横浜市緑区長津田町', '1-1-X', '田園マンション1-XXX', '045XXXXXXX', 'ichikawa@example.com', '2012/8/21'],
            ['12-007', '小河内', '恭平', '1985/5/18', '252-0222', '神奈川県相模原市中央区由野台', 'X-X-X', '', '042XXXXXXX', 'oko_kyo@example.com', '2012/9/1']
        ];

        // 列見出し
        document.getElementById('columns').innerHTML =
            '<th class="h-[25px] border-r border-b border-[#b5b5b5] p-0"><svg class="ml-[8px] h-[17px] w-[17px]" viewBox="0 0 17 17"><path d="M17 0v17H0z" fill="#b4b4b4"/></svg></th>' +
            columns.map((name, i) => i === 0
                ? `<th scope="col" class="h-[25px] border-r border-b border-[#ababab] bg-[#d2d2d2] p-0 font-light text-[#217346]">${name}</th>`
                : `<th scope="col" class="h-[25px] border-r border-b border-[#b5b5b5] p-0 font-light">${name}</th>`
            ).join('');

        // セルの中身
        const cell = (value, r, c) => {
            if (r === 0 && c === 0) {
                return `<td class="relative h-[25px] border-r-2 border-b-2 border-[#217346] bg-white p-0 pl-[3px] align-top">${value}<i class="absolute -right-[3px] -bottom-[3px] z-10 h-[6px] w-[6px] border-t border-l border-white bg-[#217346]"></i></td>`;
            }
            if (c === 0) {
                return `<td class="h-[25px] border-r border-b border-black bg-white p-0 pl-[3px] align-top">${value}</td>`;
            }
            if (r > 0 && c === 9) {
                return `<td class="h-[25px] border-r border-b border-black bg-white p-0 pl-0.5 align-top"><a href="mailto:${value}" class="text-[#0563c1] underline underline-offset-3">${value}</a></td>`;
            }
            if (r > 0 && (c === 3 || c === 10)) {
                return `<td class="h-[25px] border-r border-b border-black bg-white p-0 pr-0.5 text-right align-top">${value}</td>`;
            }
            return `<td class="h-[25px] border-r border-b border-black bg-white p-0 pl-0.5 align-top">${value}</td>`;
        };

        document.getElementById('rows').innerHTML = rows.map((row, r) => {
            const head = r === 0
                ? '<th scope="row" class="h-[25px] border-r border-b border-[#ababab] bg-[#d2d2d2] p-0 align-top font-light text-[#217346]">1</th>'
                : `<th scope="row" class="h-[25px] border-r border-b border-[#b5b5b5] p-0 align-top font-light">${r + 1}</th>`;
            return `<tr>${head}${row.map((value, c) => cell(value, r, c)).join('')}</tr>`;
        }).join('');
    </script>
</body>
</html>
